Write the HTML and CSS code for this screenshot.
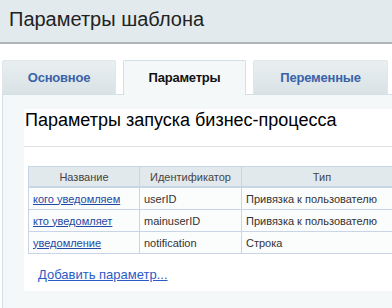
FILE: index.html
```html
<!DOCTYPE html>
<html lang="ru">
<head>
    <meta charset="UTF-8">
    <title>Параметры шаблона</title>
    <link rel="stylesheet" href="styles.css">
</head>
<body>
    <div class="page-header">
        <h1>Параметры шаблона</h1>
    </div>

    <div class="tabs">
        <a class="tab tab-main" href="#">Основное</a>
        <a class="tab tab-params active" href="#">Параметры</a>
        <a class="tab tab-vars" href="#">Переменные</a>
    </div>

    <div class="tab-panel">
        <div class="section">
            <h2>Параметры запуска бизнес-процесса</h2>

            <table class="params">
                <thead>
                    <tr>
                        <th class="col-name">Название</th>
                        <th class="col-id">Идентификатор</th>
                        <th class="col-type">Тип</th>
                    </tr>
                </thead>
                <tbody>
                    <tr>
                        <td><a href="#">кого уведомляем</a></td>
                        <td>userID</td>
                        <td>Привязка к пользователю</td>
                    </tr>
                    <tr>
                        <td><a href="#">кто уведомляет</a></td>
                        <td>mainuserID</td>
                        <td>Привязка к пользователю</td>
                    </tr>
                    <tr>
                        <td><a href="#">уведомление</a></td>
                        <td>notification</td>
                        <td>Строка</td>
                    </tr>
                </tbody>
            </table>

            <a class="add-link" href="#">Добавить параметр...</a>
        </div>
    </div>
</body>
</html>
```

FILE: styles.css
```css
body {
    margin: 0;
    font-family: "Liberation Sans", Arial, sans-serif;
    background: #fff;
    overflow: hidden;
}
.page-header {
    height: 42px;
    background: #e3eaed;
    border-bottom: 2px solid #aeb4b7;
}
.page-header h1 {
    margin: 0;
    padding: 7px 0 0 9px;
    font-size: 20px;
    font-weight: normal;
    color: #222;
    line-height: 24px;
}
.tabs {
    display: flex;
    margin-top: 16px;
    padding-left: 2px;
}
.tab {
    box-sizing: border-box;
    height: 34px;
    line-height: 33px;
    text-align: center;
    font-size: 13px;
    font-weight: bold;
    color: #3a62a8;
    text-decoration: none;
    background: linear-gradient(#e9eff1, #d9e2e5);
    border: 1px solid #e0e7ea;
    border-bottom: none;
    border-radius: 2px 2px 0 0;
    letter-spacing: -0.2px;
}
.tab-main {
    width: 114px;
}
.tab-params {
    width: 123px;
    margin-left: 7px;
}
.tab-vars {
    width: 135px;
    margin-left: 7px;
}
.tab.active {
    color: #111;
    background: #f5f8f9;
    border-color: #d3dee5;
    height: 35px;
    margin-bottom: -1px;
    position: relative;
}
.tab-panel {
    background: #f5f8f9;
    border-top: 1px solid #d3dee5;
    border-left: 1px solid #d3dee5;
    margin-left: 2px;
    padding: 14px 0 22px 21px;
}
.section {
    background: #fff;
    padding-bottom: 8px;
}
.section h2 {
    margin: 0;
    padding: 0 0 0 1px;
    line-height: 22px;
    font-size: 18px;
    font-weight: normal;
    color: #000;
    border-bottom: 1px solid #dde3e6;
    box-sizing: border-box;
    height: 38px;
}
.params {
    border-collapse: collapse;
    table-layout: fixed;
    margin: 19px 0 0 4px;
    font-size: 11px;
    width: 375px;
}
.params th,
.params td {
    border: 1px solid #c9d5e6;
    height: 21px;
    padding: 0 4px;
    white-space: nowrap;
}
.params th {
    background: #e2e9ec;
    font-weight: normal;
    color: #444;
    height: 19px;
    border-bottom-width: 2px;
}
.params td {
    background: #fbfcfc;
    color: #333;
}
.params .col-name {
    width: 102px;
}
.params .col-id {
    width: 93px;
}
.params a {
    color: #2449a4;
}
.add-link {
    display: inline-block;
    margin: 13px 0 0 14px;
    font-size: 13px;
    color: #2a5bc6;
}
```
